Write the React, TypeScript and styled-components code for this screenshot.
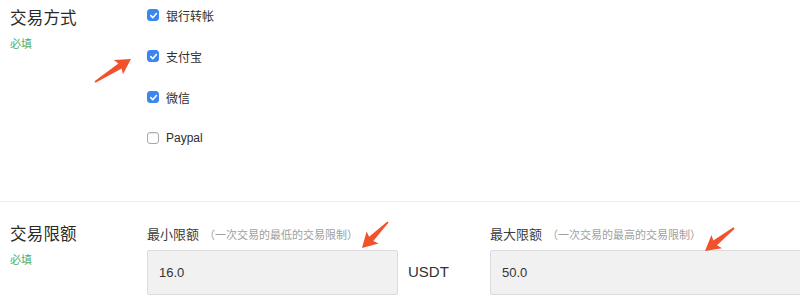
import React from "react";
import styled, { createGlobalStyle } from "styled-components";

const GlobalStyle = createGlobalStyle`
  html, body {
    margin: 0;
    padding: 0;
    background: #fff;
  }
  body {
    font-family: "Liberation Sans", "Noto Sans CJK SC", sans-serif;
    color: #333;
    overflow: hidden;
  }
`;

const Page = styled.div`
  position: relative;
  width: 800px;
  height: 303px;
  overflow: hidden;
`;

const Section = styled.div<{ $pt: number; $h: number }>`
  display: flex;
  padding: ${(p) => p.$pt}px 0 0 10px;
  height: ${(p) => p.$h}px;
  box-sizing: border-box;
`;

const LabelCol = styled.div<{ $titleTop: number }>`
  width: 137px;
  flex-shrink: 0;
  padding-top: ${(p) => p.$titleTop}px;
`;

const Title = styled.div`
  font-size: 16.5px;
  line-height: 20px;
  color: #2a2a2a;
  letter-spacing: 0.2px;
`;

const Required = styled.div`
  margin-top: 9px;
  font-size: 11px;
  line-height: 14px;
  color: #4cae6a;
`;

const Options = styled.div`
  display: flex;
  flex-direction: column;
  gap: 21px;
`;

const Option = styled.label`
  display: flex;
  align-items: center;
  gap: 7px;
  height: 20px;
  font-size: 12px;
  color: #2e2e2e;
`;

const Box = styled.span<{ $checked: boolean }>`
  width: 12px;
  height: 12px;
  box-sizing: border-box;
  border-radius: 3px;
  display: inline-flex;
  align-items: center;
  justify-content: center;
  background: ${(p) => (p.$checked ? "#3a87f0" : "#fff")};
  border: 1px solid ${(p) => (p.$checked ? "#3a87f0" : "#a9a9a9")};
  box-shadow: ${(p) => (p.$checked ? "none" : "inset 0 1px 1px rgba(0,0,0,0.08)")};
`;

const Divider = styled.div`
  height: 1px;
  background: #ececec;
`;

const Fields = styled.div`
  display: flex;
  align-items: flex-start;
`;

const Field = styled.div<{ $w: number }>`
  width: ${(p) => p.$w}px;
  flex-shrink: 0;
`;

const FieldLabel = styled.div`
  font-size: 13px;
  line-height: 18px;
  color: #3a3a3a;
  padding-top: 4px;
  margin-bottom: 6px;
  white-space: nowrap;
`;

const Hint = styled.span`
  font-size: 11px;
  color: #a0a0a0;
  margin-left: 5px;
`;

const Input = styled.div`
  height: 45px;
  box-sizing: border-box;
  background: #f1f1f1;
  border: 1px solid #dcdcdc;
  border-radius: 2px;
  padding-left: 11px;
  display: flex;
  align-items: center;
  font-size: 13px;
  color: #333;
`;

const Unit = styled.div`
  width: 92px;
  flex-shrink: 0;
  padding: 41px 0 0 10px;
  box-sizing: border-box;
  font-size: 15px;
  color: #333;
`;

const Overlay = styled.svg`
  position: absolute;
  left: 0;
  top: 0;
  pointer-events: none;
`;

const Check = () => (
  <svg width="9" height="9" viewBox="0 0 10 10">
    <path d="M2 5.2 L4.2 7.4 L8.2 2.8" fill="none" stroke="#fff" strokeWidth="1.8" strokeLinecap="round" strokeLinejoin="round" />
  </svg>
);

function arrowPoints(tx: number, ty: number, hx: number, hy: number) {
  const dx = hx - tx;
  const dy = hy - ty;
  const len = Math.hypot(dx, dy);
  const ux = dx / len;
  const uy = dy / len;
  const nx = -uy;
  const ny = ux;
  const headLen = 15;
  const headHalf = 8.5;
  const bx = hx - ux * headLen;
  const by = hy - uy * headLen;
  const pts = [
    [tx + nx * 0.9, ty + ny * 0.9],
    [bx + ux * 2 + nx * 3, by + uy * 2 + ny * 3],
    [bx + nx * headHalf, by + ny * headHalf],
    [hx, hy],
    [bx - nx * headHalf, by - ny * headHalf],
    [bx + ux * 2 - nx * 3, by + uy * 2 - ny * 3],
    [tx - nx * 0.9, ty - ny * 0.9],
  ];
  return pts.map((p) => p.map((v) => v.toFixed(1)).join(",")).join(" ");
}

const methods = [
  { name: "银行转帐", checked: true },
  { name: "支付宝", checked: true },
  { name: "微信", checked: true },
  { name: "Paypal", checked: false },
];

const arrows = [
  [95, 82, 131, 59],
  [388, 222, 362, 248],
  [734, 228, 705, 251],
];

export default function App() {
  return (
    <Page>
      <GlobalStyle />
      <Section $pt={5} $h={201}>
        <LabelCol $titleTop={3}>
          <Title>交易方式</Title>
          <Required>必填</Required>
        </LabelCol>
        <Options>
          {methods.map((m) => (
            <Option key={m.name}>
              <Box $checked={m.checked}>{m.checked && <Check />}</Box>
              {m.name}
            </Option>
          ))}
        </Options>
      </Section>
      <Divider />
      <Section $pt={20} $h={102}>
        <LabelCol $titleTop={2}>
          <Title>交易限额</Title>
          <Required>必填</Required>
        </LabelCol>
        <Fields>
          <Field $w={251}>
            <FieldLabel>
              最小限额<Hint>（一次交易的最低的交易限制）</Hint>
            </FieldLabel>
            <Input>16.0</Input>
          </Field>
          <Unit>USDT</Unit>
          <Field $w={330}>
            <FieldLabel>
              最大限额<Hint>（一次交易的最高的交易限制）</Hint>
            </FieldLabel>
            <Input>50.0</Input>
          </Field>
        </Fields>
      </Section>
      <Overlay width="800" height="303">
        {arrows.map((a, i) => (
          <polygon key={i} points={arrowPoints(a[0], a[1], a[2], a[3])} fill="#f2522b" />
        ))}
      </Overlay>
    </Page>
  );
}
